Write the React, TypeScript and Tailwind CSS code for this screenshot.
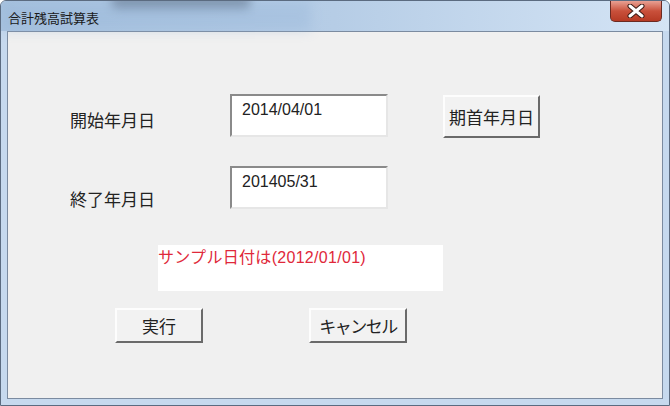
import React from 'react';

const jp = "font-['Noto_Sans_CJK_JP',sans-serif]";

function TextBox({ value }: { value: string }) {
  return (
    <div className="w-[158px] h-[43px] bg-white border-2 border-t-[#8a8a8a] border-l-[#8a8a8a] border-r-[#e6e6e6] border-b-[#e6e6e6] pl-[10px] pt-[1px]">
      <span className="font-['Liberation_Sans',sans-serif] text-[16px] leading-[20px] text-[#222]">{value}</span>
    </div>
  );
}

function WinButton({ label, className = '' }: { label: string; className?: string }) {
  return (
    <button
      className={`flex items-center justify-center bg-[#f2f2f2] border-2 border-t-[#fdfdfd] border-l-[#fdfdfd] border-r-[#6a6a6a] border-b-[#6a6a6a] text-[17px] leading-[20px] text-[#222] ${jp} ${className}`}
    >
      {label}
    </button>
  );
}

export default function App() {
  return (
    <div className="w-[670px] h-[406px] flex flex-col bg-[#c6d9ee] border border-[#5b6b80] rounded-t-[6px] overflow-hidden">
      {/* Title bar */}
      <div className="relative h-[30px] flex items-center justify-between bg-gradient-to-r from-[#a9c3df] via-[#b6cde6] to-[#d4e4f5]">
        <div className="absolute left-[110px] top-[-6px] w-[140px] h-[14px] bg-[#5f6f84] opacity-60 blur-[5px] rounded-full" />
        <div className="absolute left-[0px] top-[0px] w-[310px] h-[30px] bg-[#8fb0d6] opacity-30 blur-[6px]" />
        <span className={`relative ml-[7px] mt-[3px] text-[13px] leading-[16px] text-[#1a1a1a] ${jp}`}>合計残高試算表</span>
        <div className="relative self-start mr-[7px] w-[52px] h-[21px] rounded-b-[5px] border border-t-0 border-[#6b2a22] bg-gradient-to-b from-[#e8a093] via-[#c9503b] to-[#b63a24] flex items-center justify-center">
          <svg width="18" height="14" viewBox="0 0 18 14">
            <path d="M3 2 L15 12 M15 2 L3 12" stroke="#3b1a14" strokeWidth="5" strokeLinecap="round" />
            <path d="M3 2 L15 12 M15 2 L3 12" stroke="#ffffff" strokeWidth="3" strokeLinecap="round" />
          </svg>
        </div>
      </div>

      {/* Client area */}
      <div className="flex-1 mx-[6px] mb-[6px] border border-[#7b8ba0] bg-[#f0f0f0] flex flex-col">
        <div className="mt-[62px] flex items-start">
          <div className={`ml-[62px] w-[160px] mt-[16px] text-[17px] leading-[20px] text-[#222] ${jp}`}>開始年月日</div>
          <TextBox value="2014/04/01" />
          <WinButton label="期首年月日" className="ml-[55px] mt-[1px] w-[97px] h-[43px]" />
        </div>

        <div className="mt-[28px] flex items-start">
          <div className={`ml-[62px] w-[160px] mt-[23px] text-[17px] leading-[20px] text-[#222] ${jp}`}>終了年月日</div>
          <TextBox value="201405/31" />
        </div>

        <div className="mt-[36px] ml-[150px] w-[285px] h-[46px] bg-white">
          <span className={`text-[16px] leading-[18px] text-[#e0283a] tracking-[0.3px] ${jp}`}>
            サンプル日付は<span className="font-['Liberation_Sans',sans-serif]">(2012/01/01)</span>
          </span>
        </div>

        <div className="mt-[17px] flex items-start">
          <WinButton label="実行" className="ml-[107px] w-[88px] h-[35px]" />
          <WinButton label="キャンセル" className="ml-[106px] w-[98px] h-[35px] tracking-[-1.5px]" />
        </div>
      </div>
    </div>
  );
}
